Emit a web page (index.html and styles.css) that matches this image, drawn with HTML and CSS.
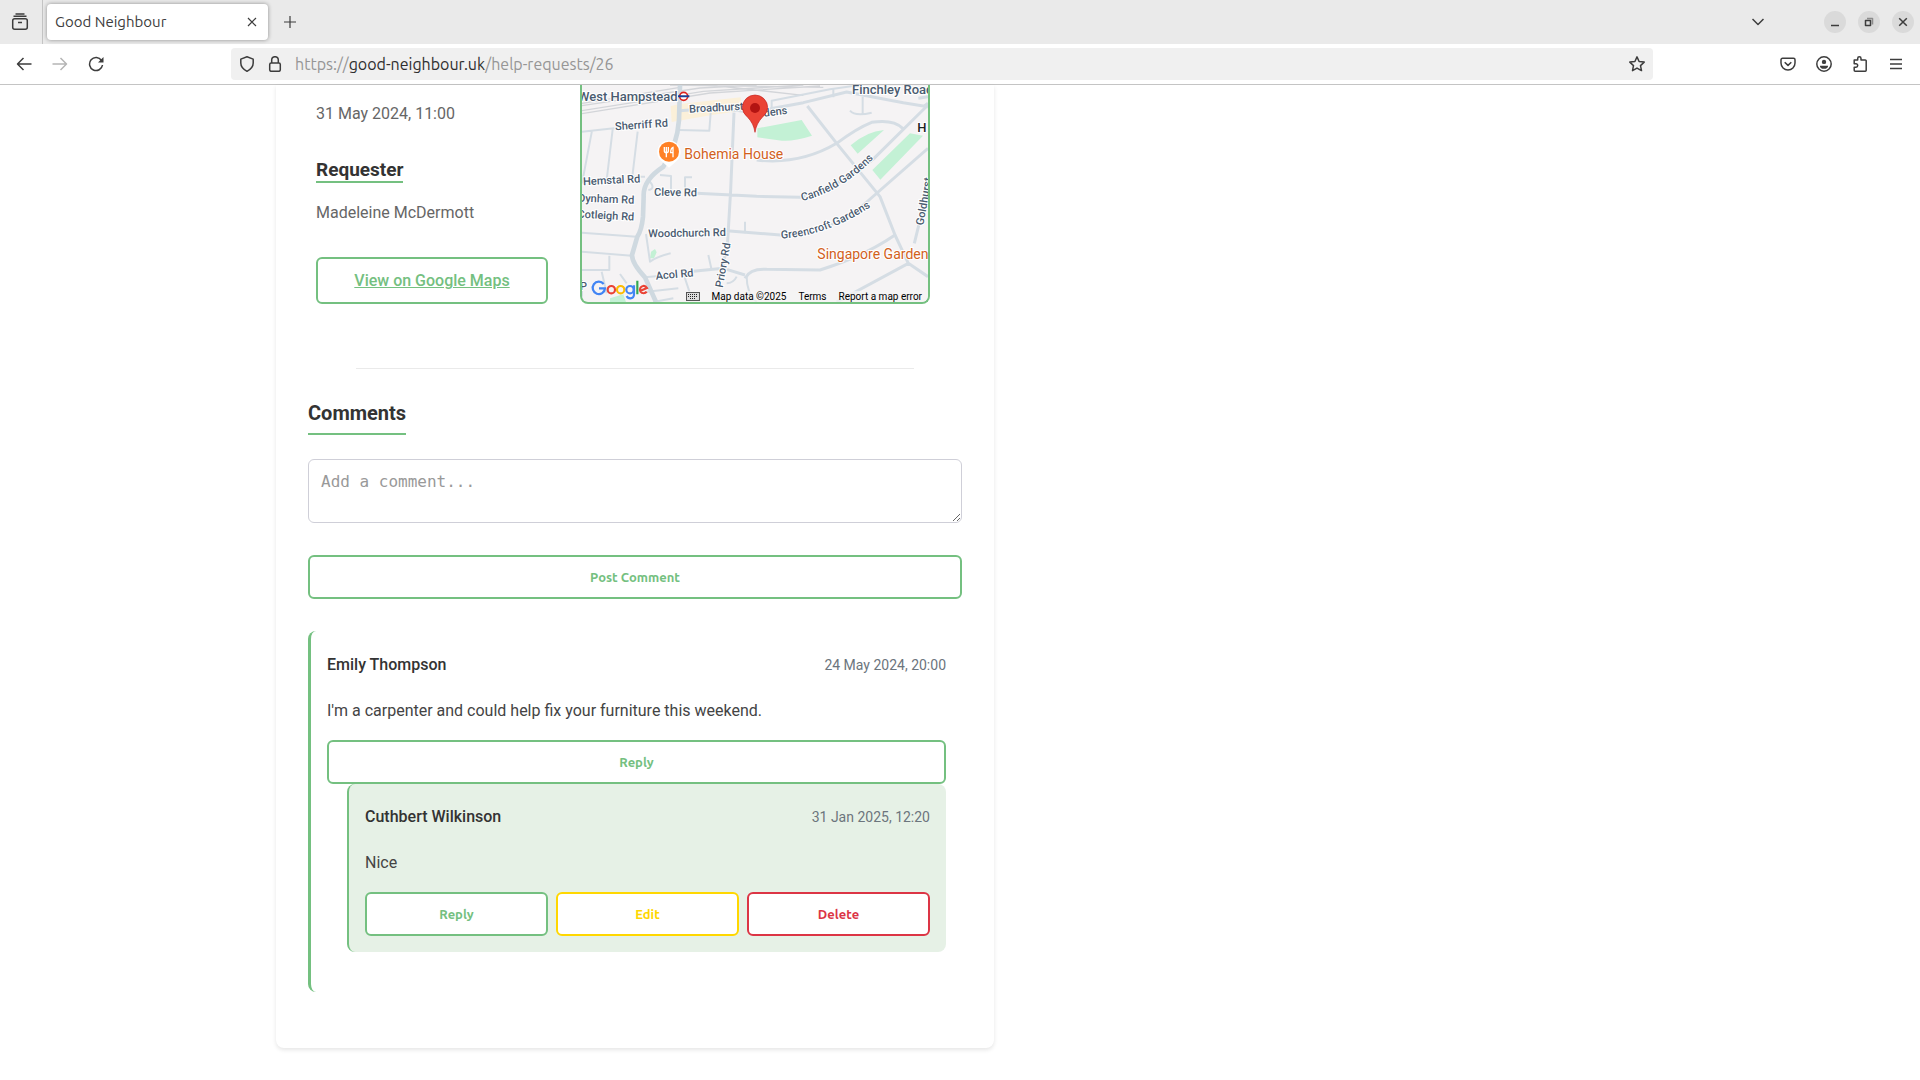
FILE: index.html
```html
<!DOCTYPE html>
<html lang="en">
<head>
<meta charset="utf-8">
<meta name="viewport" content="width=device-width, initial-scale=1">
<title>Good Neighbour</title>
<link rel="stylesheet" href="styles.css">
</head>
<body>
<header class="browser">
  <div class="tabbar">
    <button class="icon-btn view-btn" aria-label="Recent browsing">
      <svg class="icon" viewBox="0 0 18 18"><rect x="1.7" y="5.7" width="14.6" height="10.6" rx="2"/><path d="M2.5 3.3h13M4.5 1h9M7 9.5h4"/></svg>
    </button>
    <div class="tab">
      <span class="tab-title">Good Neighbour</span>
      <button class="icon-btn tab-close" aria-label="Close tab"><svg class="icon-s" viewBox="0 0 12 12"><path d="M2 2l8 8M10 2l-8 8"/></svg></button>
    </div>
    <button class="icon-btn new-tab" aria-label="New tab"><svg class="icon-s" viewBox="0 0 12 12"><path d="M6 0v12M0 6h12"/></svg></button>
    <button class="icon-btn list-tabs" aria-label="List all tabs"><svg class="icon-s" viewBox="0 0 12 12"><path d="M0.5 3l5.500 5.500l5.500-5.500"/></svg></button>
    <div class="window-controls">
      <button class="win-btn" aria-label="Minimise"><svg viewBox="0 0 22 22"><path d="M7 14.5h8"/></svg></button>
      <button class="win-btn" aria-label="Restore"><svg viewBox="0 0 22 22"><path d="M7.500 9.500h5v5h-5z"/><path class="faint" d="M9 7.500h5.500v6"/></svg></button>
      <button class="win-btn" aria-label="Close"><svg viewBox="0 0 22 22"><path d="M7.200 7.200l7.600 7.600M14.800 7.200l-7.600 7.600"/></svg></button>
    </div>
  </div>
  <nav class="toolbar">
    <div class="nav-buttons">
      <button class="icon-btn" aria-label="Back"><svg class="icon-m" viewBox="0 0 16 16"><path d="M15.500 8h-14M7.500 2l-6 6l6 6"/></svg></button>
      <button class="icon-btn faded" aria-label="Forward" disabled><svg class="icon-m" viewBox="0 0 16 16"><path d="M0.500 8h14M8.500 2l6 6l-6 6"/></svg></button>
      <button class="icon-btn" aria-label="Reload"><svg class="icon-m" viewBox="0 0 16 16"><path d="M13.500 4.500A6.500 6.500 0 1 0 14.500 9"/><path class="solid" d="M15.500 1v5.500h-5.500z"/></svg></button>
    </div>
    <div class="urlbar">
      <svg class="icon-m" viewBox="0 0 16 16"><path d="M8 0.800l6.200 2.300v3.900c0 3.500-2.200 6.200-6.200 8.300c-4-2.100-6.200-4.800-6.200-8.300v-3.900z"/></svg>
      <svg class="icon-m" viewBox="0 0 16 16"><rect x="2.700" y="7" width="10.600" height="8.300" rx="1.500"/><path d="M4.700 7V4a3.300 3.300 0 0 1 6.600 0v3"/></svg>
      <div class="url">https://<span class="host">good-neighbour.uk</span>/help-requests/26</div>
      <button class="icon-btn star" aria-label="Bookmark this page"><svg class="icon-m" viewBox="0 0 16 16"><path d="M8 0.900l2.100 4.600l5.100.600l-3.700 3.500l1 5l-4.500-2.500l-4.500 2.500l1-5l-3.700-3.500l5.100-.600z"/></svg></button>
    </div>
    <div class="actions">
      <button class="icon-btn" aria-label="Save to Pocket"><svg class="icon-m" viewBox="0 0 16 16"><path d="M2.500 2.300h11a1.500 1.500 0 0 1 1.500 1.500v3.200a7 7 0 0 1-14 0v-3.200a1.500 1.500 0 0 1 1.500-1.500zM4.700 6.200l3.300 3.200l3.300-3.200"/></svg></button>
      <button class="icon-btn" aria-label="Account"><svg class="icon-m" viewBox="0 0 16 16"><circle cx="8" cy="8" r="7.200"/><circle class="solid" cx="8" cy="5.900" r="2.200"/><path class="solid" d="M3.900 9.700h8.200c0 2.100-1.400 3.100-4.100 3.100s-4.100-1-4.100-3.100z"/></svg></button>
      <button class="icon-btn" aria-label="Extensions"><svg class="icon-m" viewBox="0 0 16 16"><path d="M2.200 3.900h3.500v-1.400a1.600 1.600 0 0 1 3.300 0v1.400h4.300a.900.900 0 0 1 .900.900v9.500a.900.900 0 0 1-.900.900h-10.200a.900.900 0 0 1-.9-.9v-3.100h1.800a1.700 1.700 0 0 0 0-3.400h-1.800z"/></svg></button>
      <button class="icon-btn" aria-label="Menu"><svg class="icon-m" viewBox="0 0 16 16"><path d="M2 3.500h12M2 8h12M2 12.500h12"/></svg></button>
    </div>
  </nav>
</header>

<main class="page">
  <article class="card">
    <section class="details">
      <div class="facts">
        <p class="fact">31 May 2024, 11:00</p>
        <h3 class="subheading">Requester</h3>
        <p class="fact">Madeleine McDermott</p>
        <a class="btn maps-link" href="#maps">View on Google Maps</a>
      </div>
      <div class="map">
        <svg class="map-art" viewBox="36 15 1038 651" preserveAspectRatio="xMidYMax slice" role="img" aria-label="Map of West Hampstead">
          <path class="park" d="M562 145L695 120L726 167Q670 185 636 182L562 172zM842 196Q890 154 942 150L863 221zM907 270L1020 160L1059 167L931 299zM243 515l12-8l5 10l-8 18h-12zM120 655l40-12l8 23h-48z"/>
          <path class="shops" d="M302 78L330 72L512 52L516 92L430 104L305 126z"/>
          <g class="rail"><path d="M36 77L390 24L560 15M36 92L400 34L700 15M36 101L420 39L750 18M300 15L760 22M420 15L700 46M36 70L330 22"/></g>
          <g class="road minor">
            <path d="M36 155L145 143M66 152L36 310M128 148L110 300M203 155L187 290L225 290M325 150L418 152L422 98M605 82V62L780 28L870 15M790 28V52M878 50V100M840 92Q855 110 905 98M235 330Q260 325 235 300M345 345V292H366M303 330V288L270 285M228 462L240 545Q260 530 302 520M36 458L200 470M36 515L185 527M118 527V570H36M95 575L110 640M150 582L170 610M225 592L300 585M230 635L325 625M415 525L425 570M525 425V460M470 610Q490 610 500 590M340 580L360 640M530 590Q530 640 560 666M36 600V650M250 666L310 655"/>
          </g>
          <g class="road">
            <path d="M330 92Q440 80 530 95M545 97L700 68L830 36L1000 68L1074 80M492 98L482 330L472 500L450 590M380 340L560 349L690 352Q830 310 912 235L1074 75M470 452L640 466Q790 455 880 375L1074 205M712 78L800 190L930 350L975 465L1015 550L1074 590M560 240Q690 255 800 190Q860 145 905 127Q970 117 998 145M1060 80L1074 70M1033 490L1055 400M340 577L460 565L525 585M525 595Q540 565 590 568L750 570Q880 530 975 465M800 666L1015 550M1074 50L1045 55"/>
          </g>
          <path class="road major" d="M330 15L327 120Q322 195 280 260Q218 300 221 350L219 410Q215 450 202 470L186 525Q186 550 225 592L258 666"/>
          <g class="street">
            <text x="24" y="63" class="place">West Hampstead</text>
            <text x="136" y="151" transform="rotate(-4 136 151)">Sherriff Rd</text>
            <text x="358" y="98" transform="rotate(-3 358 98)">Broadhurst</text>
            <text x="582" y="110" transform="rotate(-7 582 110)">dens</text>
            <text x="40" y="316" transform="rotate(-3 40 316)">Hemstal Rd</text>
            <text x="252" y="347" transform="rotate(1 252 347)">Cleve Rd</text>
            <text x="24" y="365" transform="rotate(2 24 365)">Dynham Rd</text>
            <text x="22" y="413" transform="rotate(3 22 413)">Cotleigh Rd</text>
            <text x="235" y="472" transform="rotate(-1 235 472)">Woodchurch Rd</text>
            <text x="258" y="599" transform="rotate(-5 258 599)">Acol Rd</text>
            <text x="458" y="624" transform="rotate(-80 458 624)">Priory Rd</text>
            <text><textPath href="#canfield">Canfield Gardens</textPath></text>
            <text><textPath href="#greencroft">Greencroft Gardens</textPath></text>
            <text x="1060" y="437" transform="rotate(-80 1060 437)">Goldhurst</text>
            <text x="846" y="41" class="place">Finchley Road</text>
            <text x="1042" y="157" class="area">H</text>
            <text x="30" y="630">P</text>
          </g>
          <defs>
            <path id="canfield" d="M696 363Q840 330 960 180"/>
            <path id="greencroft" d="M633 475Q790 470 960 340"/>
          </defs>
          <text class="poi" x="343" y="238">Bohemia House</text>
          <text class="poi" x="742" y="536">Singapore Garden</text>
          <circle cx="341" cy="49" r="12" fill="#fff" stroke="#dc241f" stroke-width="5"/>
          <path d="M324 49h34" stroke="#1c3f94" stroke-width="6"/>
          <path d="M297 263L272 241A35 35 0 1 1 322 241z" fill="#fff"/>
          <circle cx="297" cy="215" r="30" fill="#ff8126"/>
          <path d="M283 201v12q0 5 6 5t6-5v-12M289 201v31M309 232v-30q-7 2-7 16h7" fill="none" stroke="#fff" stroke-width="4"/>
          <path d="M555 157Q551 130 533 112Q517 98 517 83A38 38 0 0 1 593 83Q593 98 577 112Q559 130 555 157z" fill="#ea4335" stroke="#c5221f" stroke-width="2"/>
          <circle cx="555" cy="84" r="15" fill="#b31412"/>
          <g fill="none" stroke-width="6.500">
            <path stroke="#4285f4" d="M101 612A18.500 18.500 0 1 0 105 625H87"/>
            <circle cx="124" cy="629" r="11" stroke="#ea4335"/>
            <circle cx="152" cy="629" r="11" stroke="#fbbc05"/>
            <circle cx="180" cy="629" r="11" stroke="#4285f4"/>
            <path stroke="#4285f4" d="M192 616v27q0 12-11 12q-8 0-11-7"/>
            <path stroke="#34a853" d="M202 602v41"/>
            <path stroke="#ea4335" d="M210 633l21-9q-5-8-12-6a11 11 0 1 0 11 17"/>
          </g>
        </svg>
        <div class="map-footer">
          <svg class="keyboard" viewBox="0 0 14 9"><rect x=".5" y=".5" width="13" height="8" fill="#ddd" stroke="#555"/><path d="M2 2.500h10M2 4.500h10M4 6.500h6" stroke="#222" stroke-dasharray="1 1"/></svg>
          <span>Map data ©2025</span>
          <a href="#terms">Terms</a>
          <a href="#report">Report a map error</a>
        </div>
      </div>
    </section>

    <hr class="divider">

    <section class="comments">
      <h2 class="heading">Comments</h2>
      <form class="comment-form">
        <textarea class="comment-input" aria-label="Add a comment" placeholder="Add a comment..."></textarea>
        <button class="btn" type="button">Post Comment</button>
      </form>
      <article class="comment">
        <header class="comment-head"><h4 class="author">Emily Thompson</h4><time class="date">24 May 2024, 20:00</time></header>
        <p class="comment-text">I'm a carpenter and could help fix your furniture this weekend.</p>
        <div class="comment-actions"><button class="btn">Reply</button></div>
        <article class="comment reply">
          <header class="comment-head"><h4 class="author">Cuthbert Wilkinson</h4><time class="date">31 Jan 2025, 12:20</time></header>
          <p class="comment-text">Nice</p>
          <div class="comment-actions">
            <button class="btn">Reply</button>
            <button class="btn btn-edit">Edit</button>
            <button class="btn btn-delete">Delete</button>
          </div>
        </article>
      </article>
    </section>
  </article>
</main>
</body>
</html>
```
FILE: styles.css
```css
:root {
  --green: #74c080;
  --chrome-text: #3d3d3d;
}

* { box-sizing: border-box; }

body {
  margin: 0;
  background: #fff;
  color: #333;
  font: 16px/24px Roboto, sans-serif;
}

h2, h3, h4, p { margin: 0; }

button { font: inherit; cursor: pointer; }

/* Browser frame */
.browser {
  border-bottom: 1px solid #c4c4c4;
  color: var(--chrome-text);
  font-family: Ubuntu, "Noto Sans", sans-serif;
  font-size: 15px;
}

.tabbar {
  display: flex;
  align-items: center;
  height: 44px;
  padding-right: 6px;
  background: #eaeaea;
}

.browser svg {
  display: block;
  flex: none;
  fill: none;
  stroke: currentColor;
  stroke-width: 1.5;
  stroke-linejoin: round;
}

.browser svg .solid { fill: currentColor; stroke: none; }
.browser svg .faint { opacity: .5; }

.icon { width: 18px; height: 18px; }
.icon-m { width: 16px; height: 16px; }
.icon-s { width: 12px; height: 12px; }

.icon-btn {
  display: grid;
  place-items: center;
  flex: none;
  width: 36px;
  height: 36px;
  padding: 0;
  border: 0;
  background: none;
  color: inherit;
}

.icon-btn.faded { color: #b5b5b5; }

.view-btn {
  width: 43px;
  height: 44px;
  padding-right: 3px;
  border-right: 1px solid #c4c4c4;
}

.tab {
  display: flex;
  align-items: center;
  justify-content: space-between;
  width: 221px;
  height: 36px;
  margin-left: 4px;
  padding-left: 8px;
  border-radius: 4px;
  background: #fff;
  box-shadow: 0 0 4px rgba(0, 0, 0, .4);
}

.tab-close { width: 32px; }
.tab-close svg, .new-tab svg { stroke-width: 1.2; }
.new-tab { margin-left: 4px; }
.list-tabs { margin-left: auto; }

.window-controls {
  display: flex;
  gap: 12px;
  margin-left: 48px;
}

.win-btn {
  width: 22px;
  height: 22px;
  padding: 0;
  border: 0;
  border-radius: 50%;
  background: #dadada;
  color: inherit;
}

.toolbar {
  display: flex;
  align-items: center;
  height: 40px;
  padding: 0 6px;
}

.nav-buttons, .actions { display: flex; }
.nav-buttons { width: 225px; }
.actions { width: 261px; justify-content: flex-end; }

.urlbar {
  display: flex;
  flex: 1;
  align-items: center;
  gap: 12px;
  min-width: 0;
  height: 32px;
  padding-left: 8px;
  border-radius: 4px;
  background: #f0f0f0;
}

.url {
  flex: 1;
  overflow: hidden;
  color: #969696;
  font-size: 16px;
  white-space: nowrap;
}

.host { color: #2e2e2e; }
.star { width: 32px; }

/* Page */
.page {
  display: grid;
  grid-template-columns: minmax(0, 718fr) minmax(0, 650fr);
  max-width: 1368px;
  margin: 0 auto 32px;
}

.card {
  padding: 0 32px 56px;
  border-radius: 0 0 8px 8px;
  background: #fff;
  box-shadow: 0 2px 4px rgba(0, 0, 0, .1);
}

.details {
  display: grid;
  grid-template-columns: minmax(0, 232fr) minmax(0, 350fr);
  gap: 32px;
  padding: 0 32px 0 8px;
}

.facts {
  display: flex;
  flex-direction: column;
  align-items: flex-start;
  padding-top: 17px;
}

.fact { color: #666; }

.subheading {
  margin: 32px 0 18px;
  border-bottom: 2px solid var(--green);
  font-size: 19px;
  line-height: 23px;
}

.btn {
  flex: 1;
  min-height: 44px;
  padding: 8px;
  border: 2px solid var(--green);
  border-radius: 6px;
  background: #fff;
  color: var(--green);
  font: 600 13px/20px Ubuntu, "Noto Sans", sans-serif;
  text-align: center;
}

.btn-edit { border-color: #ffd700; color: #ffd700; }
.btn-delete { border-color: #dc3545; color: #dc3545; }

.maps-link {
  flex: none;
  width: 100%;
  min-height: 47px;
  margin-top: 32px;
  font: 500 16px/27px Roboto, sans-serif;
  text-decoration: underline;
}

.map {
  position: relative;
  overflow: hidden;
  border: 2px solid var(--green);
  border-top: 0;
  border-radius: 0 0 8px 8px;
  background: #f5f3f4;
}

.map-art {
  position: absolute;
  inset: 0;
  width: 100%;
  height: 100%;
}

.park { fill: #c3f1d5; }
.shops { fill: #fbf0d9; }
.rail { fill: none; stroke: #d3d5d9; stroke-width: 4; }
.road { fill: none; stroke: #d5dde4; stroke-width: 9; stroke-linejoin: round; }
.road.minor { stroke-width: 6; }
.road.major { stroke-width: 14; stroke: #cfd9e0; }

.map-art text {
  font-family: Roboto, sans-serif;
  font-weight: 500;
  paint-order: stroke;
  stroke: #fff;
  stroke-width: 6;
}

.street { fill: #4a5b70; font-size: 33px; }
.street .place { font-size: 39px; }
.street .area { fill: #222; font-size: 39px; }
.map-art .poi { fill: #d2611c; font-size: 42px; font-weight: 400; }

.map-footer {
  position: absolute;
  right: 0;
  bottom: 0;
  display: flex;
  align-items: center;
  gap: 12px;
  padding: 0 6px;
  background: rgba(245, 243, 244, .7);
  color: #000;
  font-size: 10px;
  line-height: 11px;
  white-space: nowrap;
}

.map-footer a { color: inherit; text-decoration: none; }
.keyboard { width: 14px; height: 9px; }

.divider {
  height: 1px;
  margin: 64px 48px 32px;
  border: 0;
  background: #eaeaea;
}

.heading {
  width: fit-content;
  padding-bottom: 8px;
  border-bottom: 2px solid var(--green);
  font-size: 20px;
  line-height: 24px;
}

.comment-form {
  display: flex;
  flex-direction: column;
  gap: 32px;
  margin: 24px 0 32px;
}

.comment-input {
  width: 100%;
  height: 64px;
  padding: 12px;
  border: 1px solid #cfcfd8;
  border-radius: 6px;
  font: 16px/19px "DejaVu Sans Mono", monospace;
  resize: vertical;
}

.comment-input::placeholder { color: #999; }

.comment {
  padding: 22px 16px 40px;
  border-left: 3px solid var(--green);
  border-radius: 8px;
}

.reply {
  margin-left: 20px;
  padding-top: 21px;
  padding-bottom: 16px;
  border-left-width: 2px;
  background: #e6f1e6;
}

.comment-head {
  display: flex;
  justify-content: space-between;
}

.author { font-size: 16px; font-weight: 500; }
.date { color: #6c757d; font-size: 14px; }
.comment-text { margin: 22px 0 17px; color: #444; }
.comment-actions { display: flex; gap: 8px; }
```
